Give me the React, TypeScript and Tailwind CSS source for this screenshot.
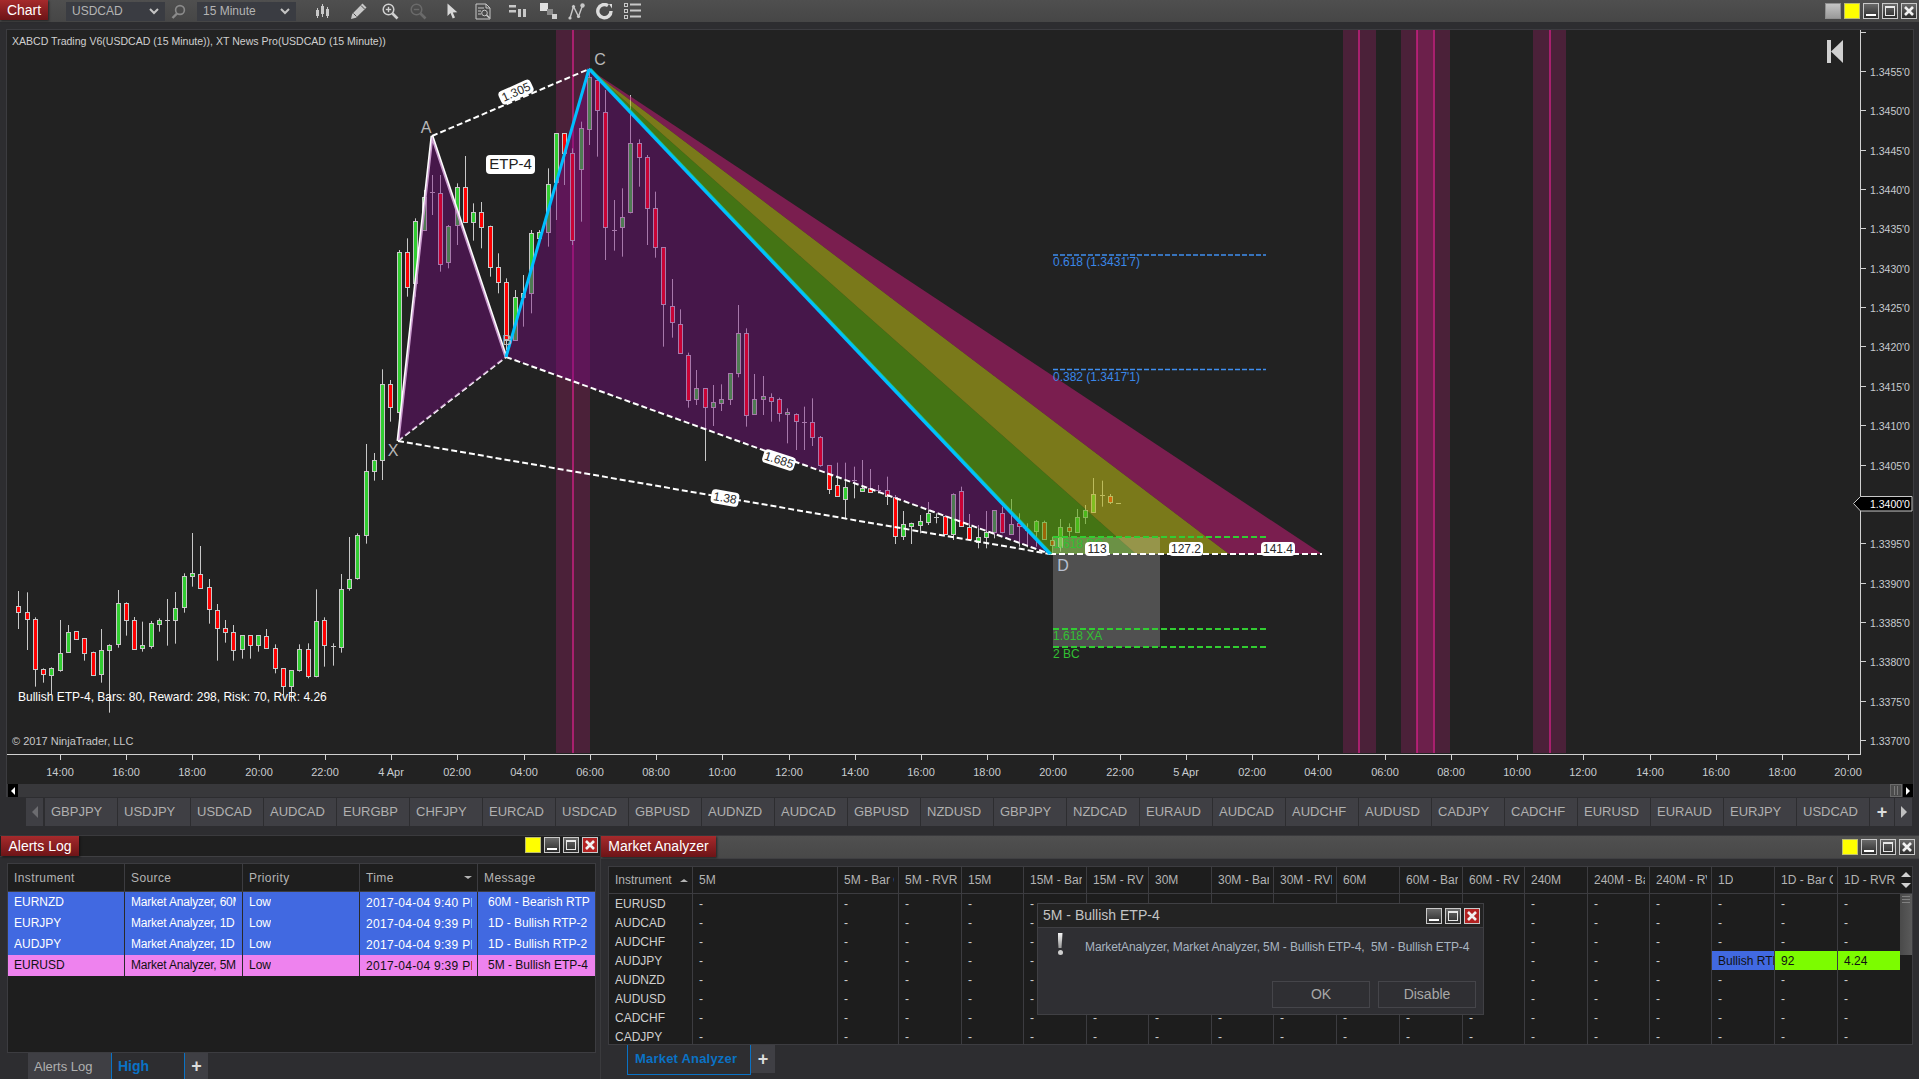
import React from "react";

type C = [number, number, number, number, string];

const z8: C[] = [
  [483,597,527,545,"r"],[487,660,545,568,"r"],[562,770,566,716,"r"],[715,758,716,731,"r"],[712,795,715,734,"g"],
  [570,725,670,719,"g"],[585,668,607,667,"g"],[604,626,604,626,"r"],[625,692,625,670,"r"],[665,737,667,734,"r"],
  [597,758,661,733,"g"],[643,848,646,659,"g"],[480,653,520,643,"g"],[517,617,520,571,"r"],[561,659,571,658,"r"],
  [575,665,646,655,"g"],[573,656,580,647,"g"],[565,605,571,583,"g"],[507,647,571,571,"g"],[486,641,535,569,"g"],
  [430,548,439,532,"g"],[309,470,430,439,"g"],[348,475,433,473,"r"],[447,581,472,538,"r"],[522,692,539,595,"r"],
  [570,638,595,607,"r"],[585,692,607,661,"r"],[616,686,616,658,"g"],[616,686,616,646,"r"],[616,665,616,646,"g"],
  [597,655,619,655,"r"],[643,730,655,715,"r"],[715,795,715,769,"r"],[721,815,721,769,"g"],[643,725,658,719,"g"],
  [640,745,658,739,"r"],[478,742,574,739,"g"],[562,710,571,646,"r"],[640,707,647,647,"g"],[432,668,478,652,"g"],
  [321,482,448,475,"g"],[310,449,316,445,"g"],[42,341,124,316,"g"],[69,152,91,124,"g"],
];
const z6: C[] = [
  [1018,1350,1063,1290,"g"],[1050,1175,1063,1130,"r"],[660,1230,667,1147,"g"],[625,800,667,770,"r"],[565,800,573,760,"g"],
  [480,575,500,600,"g"],[435,555,485,485,"g"],[435,725,490,703,"r"],[585,715,587,697,"g"],[460,645,470,585,"g"],
  [378,575,470,575,"r"],[520,632,545,575,"g"],[516,655,547,590,"r"],[587,740,587,712,"r"],[670,790,712,757,"r"],
  [745,960,755,930,"r"],[780,930,800,930,"g"],[735,890,790,800,"g"],[600,850,610,790,"g"],[600,630,607,625,"g"],
  [415,650,463,607,"g"],[310,570,310,455,"g"],[310,465,310,370,"r"],[355,645,370,630,"r"],[275,575,293,418,"g"],
  [115,345,140,298,"g"],[150,380,150,240,"r"],[180,690,245,592,"r"],[510,662,600,600,"g"],[475,680,562,590,"g"],
  [195,550,340,547,"g"],[328,470,340,382,"r"],[375,645,382,535,"r"],[485,683,535,652,"r"],[652,950,652,822,"r"],
  [747,923,827,877,"r"],[838,970,883,970,"r"],[968,1133,975,1110,"r"],[1020,1125,1075,1108,"g"],[1075,1293,1075,1132,"r"],
  [1065,1188,1115,1132,"g"],[1063,1143,1108,1120,"g"],[1030,1125,1030,1108,"g"],[825,1042,910,1030,"g"],[895,1190,910,1156,"r"],
  [1032,1155,1108,1153,"g"],[1038,1155,1097,1108,"g"],[1090,1175,1100,1113,"r"],[1103,1175,1108,1150,"r"],[1135,1240,1147,1153,"g"],
  [1150,1260,1153,1173,"r"],[1130,1260,1175,1175,"g"],[1105,1248,1175,1222,"r"],[1218,1310,1220,1305,"r"],
];
const z7: C[] = [
  [105,192,105,177,"r"],[98,197,166,197,"r"],[98,268,172,206,"g"],[110,205,150,150,"g"],[90,185,175,182,"g"],
  [117,185,173,185,"r"],[165,190,180,180,"g"],[140,225,181,198,"r"],[195,342,200,317,"r"],[243,330,283,317,"g"],
  [278,342,280,287,"g"],[255,310,273,285,"g"],[216,285,250,275,"g"],[250,280,262,262,"g"],[255,312,259,311,"r"],
  [190,330,193,311,"g"],[170,290,184,289,"r"],[252,330,290,328,"r"],[285,355,322,336,"g"],[243,355,307,322,"g"],
  [240,325,241,307,"g"],[230,310,250,307,"r"],[207,315,283,311,"g"],[250,350,280,288,"r"],[280,352,300,300,"g"],
  [270,350,274,302,"g"],[272,330,275,328,"r"],[320,370,329,345,"r"],[267,365,290,350,"g"],[280,320,292,304,"r"],
  [237,305,260,305,"g"],[225,282,241,260,"g"],[144,245,193,245,"g"],[152,230,194,194,"g"],[192,222,199,217,"r"],[218,218,218,218,"g"],
];
const candles: C[] = [
  ...z8.map((c) => [430 + c[0] / 3, 430 + c[1] / 3, 430 + c[2] / 3, 430 + c[3] / 3, c[4]] as C),
  ...z6.map((c) => [30 + c[0] / 3, 30 + c[1] / 3, 30 + c[2] / 3, 30 + c[3] / 3, c[4]] as C),
  ...z7.map((c) => [430 + c[0] / 3, 430 + c[1] / 3, 430 + c[2] / 3, 430 + c[3] / 3, c[4]] as C),
];

const PRICES = ["1.3455","1.3450","1.3445","1.3440","1.3435","1.3430","1.3425","1.3420","1.3415","1.3410","1.3405","1.3400","1.3395","1.3390","1.3385","1.3380","1.3375","1.3370"];
const TIMES = ["14:00","16:00","18:00","20:00","22:00","4 Apr","02:00","04:00","06:00","08:00","10:00","12:00","14:00","16:00","18:00","20:00","22:00","5 Apr","02:00","04:00","06:00","08:00","10:00","12:00","14:00","16:00","18:00","20:00"];
const TABS = ["GBPJPY","USDJPY","USDCAD","AUDCAD","EURGBP","CHFJPY","EURCAD","USDCAD","GBPUSD","AUDNZD","AUDCAD","GBPUSD","NZDUSD","GBPJPY","NZDCAD","EURAUD","AUDCAD","AUDCHF","AUDUSD","CADJPY","CADCHF","EURUSD","EURAUD","EURJPY","USDCAD"];

function Candles() {
  return (
    <g>
      {candles.map((c, i) => {
        const x = Math.round(18.3 + 8.27 * i);
        const top = Math.round(c[2]);
        const bot = Math.round(c[3]);
        const fill = c[4] === "g" ? "#32cd32" : "#ff0000";
        return (
          <g key={i}>
            <line x1={x + 0.5} x2={x + 0.5} y1={c[0]} y2={c[1]} stroke="#c8c8c8" strokeWidth={1} />
            {bot - top < 1 ? (
              <line x1={x - 2} x2={x + 3} y1={top + 0.5} y2={top + 0.5} stroke="#c8c8c8" strokeWidth={1} />
            ) : (
              <rect x={x - 1.5} y={top + 0.5} width={4} height={bot - top} fill={fill} stroke="#c8c8c8" strokeWidth={1} />
            )}
          </g>
        );
      })}
    </g>
  );
}

function Label({ x, y, r = 0, w, text, h = 14 }: { x: number; y: number; r?: number; w: number; text: string; h?: number }) {
  return (
    <g transform={`translate(${x} ${y}) rotate(${r})`}>
      <rect x={-w / 2} y={-h / 2} width={w} height={h} rx={4} fill="#ffffff" />
      <text x={0} y={4} textAnchor="middle" fontSize={12} fill="#2a2a2a">{text}</text>
    </g>
  );
}

function ChartSvg() {
  const X = [398, 441];
  const A = [432, 136];
  const B = [506, 357];
  const CC = [589, 69];
  const D = [1050, 554];
  const pts = (a: number[][]) => a.map((p) => p.join(",")).join(" ");
  const bands = [
    [556, 590, [573]],
    [1343, 1376, [1359]],
    [1401, 1434, [1417]],
    [1417, 1450, [1434]],
    [1533, 1566, [1550]],
  ] as [number, number, number[]][];
  return (
    <svg width={1906} height={754} viewBox="7 30 1906 754" className="block bg-[#222222]">
      {bands.map(([a, b, ls], i) => (
        <g key={i}>
          <rect x={a} y={30} width={b - a} height={723} fill="rgba(239,29,149,0.2)" />
          {ls.map((l) => (
            <rect key={l} x={l - 1} y={30} width={2} height={723} fill="#a8206e" />
          ))}
        </g>
      ))}
      <Candles />
      <polyline points={pts([X, A, B])} fill="none" stroke="#ffffff" strokeWidth={3} />
      <line x1={X[0]} y1={X[1]} x2={B[0]} y2={B[1]} stroke="#ffffff" strokeWidth={2} strokeDasharray="6 3" />
      <polygon points={pts([X, A, B])} fill="rgba(122,7,131,0.41)" />
      <polygon points={pts([CC, D, [1136, 554]])} fill="rgba(92,172,12,0.6)" />
      <polygon points={pts([CC, [1136, 554], [1229, 554]])} fill="rgba(182,180,22,0.6)" />
      <polygon points={pts([CC, [1229, 554], [1322, 554]])} fill="rgba(181,29,110,0.6)" />
      <polygon points={pts([B, CC, D])} fill="rgba(122,7,131,0.41)" />
      <rect x={1053} y={537} width={107} height={110} fill="rgba(255,255,255,0.21)" />
      <line x1={A[0]} y1={A[1]} x2={CC[0]} y2={CC[1]} stroke="#fff" strokeWidth={2} strokeDasharray="6 3" />
      <line x1={B[0]} y1={B[1]} x2={D[0]} y2={D[1]} stroke="#fff" strokeWidth={2} strokeDasharray="6 3" />
      <line x1={X[0]} y1={X[1]} x2={D[0]} y2={D[1]} stroke="#fff" strokeWidth={2} strokeDasharray="6 3" />
      <line x1={D[0]} y1={D[1]} x2={1322} y2={554} stroke="#fff" strokeWidth={2} strokeDasharray="6 3" />
      <line x1={CC[0] + 1.5} y1={CC[1]} x2={D[0] + 1.5} y2={D[1]} stroke="#1cc88f" strokeWidth={2.5} />
      <line x1={CC[0]} y1={CC[1]} x2={D[0]} y2={D[1]} stroke="#00bfff" strokeWidth={3} />
      <line x1={B[0]} y1={B[1]} x2={CC[0]} y2={CC[1]} stroke="#00bfff" strokeWidth={3} />

      {[[255, "0.618 (1.3431'7)"], [369.5, "0.382 (1.3417'1)"]].map(([y, t]) => (
        <g key={t as string}>
          <line x1={1053} x2={1266} y1={y as number} y2={y as number} stroke="#3f8ef0" strokeWidth={1.5} strokeDasharray="5 2" />
          <text x={1053} y={(y as number) + 11} fontSize={12} fill="#3a87e8">{t}</text>
        </g>
      ))}
      {[537, 629, 647].map((y) => (
        <line key={y} x1={1053} x2={1266} y1={y} y2={y} stroke="#32cd32" strokeWidth={2} strokeDasharray="6 3" />
      ))}
      <text x={1053} y={548} fontSize={12} fill="#33c033">1.618 BC</text>
      <text x={1053} y={640} fontSize={12} fill="#33c033">1.618 XA</text>
      <text x={1053} y={658} fontSize={12} fill="#33c033">2 BC</text>

      <Label x={516} y={92} r={-24} w={35} text="1.305" />
      <Label x={779} y={460} r={18} w={33} text="1.685" />
      <Label x={725} y={498} r={10} w={28} text="1.38" />
      <Label x={1097} y={549} w={24} text="113" />
      <Label x={1186} y={549} w={34} text="127.2" />
      <Label x={1278} y={549} w={34} text="141.4" />
      <rect x={486} y={155} width={49} height={19} rx={4} fill="#ffffff" />
      <text x={510.5} y={169} textAnchor="middle" fontSize={15} fill="#222">ETP-4</text>

      <text x={426} y={133} textAnchor="middle" fontSize={16} fill="#b8b8b8">A</text>
      <text x={600} y={65} textAnchor="middle" fontSize={16} fill="#b8b8b8">C</text>
      <text x={393} y={456} textAnchor="middle" fontSize={16} fill="#b8b8b8">X</text>
      <text x={507} y={345} textAnchor="middle" fontSize={14} fill="#b8b8b8">B</text>
      <text x={1063} y={571} textAnchor="middle" fontSize={16} fill="#b8c0d0">D</text>

      <text x={12} y={45} fontSize={10.55} fill="#d0d0d0">XABCD Trading V6(USDCAD (15 Minute)), XT News Pro(USDCAD (15 Minute))</text>
      <text x={18} y={701} fontSize={12} fill="#ffffff">Bullish ETP-4, Bars: 80, Reward: 298, Risk: 70, RvR: 4.26</text>
      <text x={12} y={745} fontSize={11} fill="#c8c8c8">© 2017 NinjaTrader, LLC</text>

      <polygon points="1827,40 1831,40 1831,63 1827,63" fill="#d0d0d0" />
      <polygon points="1843,40 1843,63 1831,51.5" fill="#d0d0d0" />

      <line x1={1860.5} x2={1860.5} y1={30} y2={754} stroke="#d0d0d0" />
      <line x1={7} x2={1861} y1={754.5} y2={754.5} stroke="#d0d0d0" />
      <line x1={1860} x2={1866} y1={32.5} y2={32.5} stroke="#d0d0d0" />
      {PRICES.map((p, i) => {
        const y = Math.round(71 + 39.35 * i);
        return (
          <g key={p}>
            <line x1={1860} x2={1866} y1={y + 0.5} y2={y + 0.5} stroke="#d0d0d0" />
            {p !== "1.3400" && <text x={1870} y={y + 4.5} fontSize={10.5} fill="#c8ccd0">{p + "'0"}</text>}
          </g>
        );
      })}
      <polygon points="1853.5,503.5 1860.5,496.5 1912,496.5 1912,511 1860.5,511" fill="#000" stroke="#c8c8c8" />
      <text x={1870} y={507.5} fontSize={10.5} fill="#ffffff">1.3400'0</text>
      {TIMES.map((t, i) => {
        const x = Math.round(60 + 66.23 * i);
        return (
          <g key={i}>
            <line x1={x + 0.5} x2={x + 0.5} y1={754} y2={760} stroke="#d0d0d0" />
            <text x={x} y={776} textAnchor="middle" fontSize={11} fill="#c8ccd0">{t}</text>
          </g>
        );
      })}
    </svg>
  );
}

function WinBtn({ kind, red }: { kind: "grey" | "yellow" | "min" | "max" | "close"; red?: boolean }) {
  if (kind === "grey") return <div className="w-4 h-4 border border-[#8f8f8f] bg-gradient-to-b from-[#c4c4c4] to-[#9a9a9a]" />;
  if (kind === "yellow") return <div className="w-4 h-4 border border-[#bdbd70] bg-[#ffff00]" />;
  const bg = red
    ? "bg-[#b22222] border-[#c9c9c9]"
    : "bg-gradient-to-b from-[#6a6a6a] to-[#2c2c2c] border-[#c9c9c9]";
  return (
    <div className={`w-4 h-4 border ${bg} relative flex items-center justify-center`}>
      {kind === "min" && <div className="absolute left-[2px] right-[2px] bottom-[2px] h-[2px] bg-white" />}
      {kind === "max" && <div className="w-[10px] h-[10px] border border-[#e8e8e8] border-t-2" />}
      {kind === "close" && (
        <svg width="12" height="12" viewBox="0 0 12 12">
          <path d="M2 2 L10 10 M10 2 L2 10" stroke="#f0f0f0" strokeWidth="2.6" />
        </svg>
      )}
    </div>
  );
}

const ic = "#c8c8c8";
const IconBars = () => (
  <svg width="15" height="16" viewBox="0 0 15 16" className="ml-[19px]">
    <path d="M2.5 5v10M7.5 1v13M12.5 4v11" stroke={ic} />
    <rect x="1" y="7" width="3" height="6" fill={ic} /><rect x="6" y="3" width="3" height="8" fill={ic} /><rect x="11" y="6" width="3" height="7" fill={ic} />
  </svg>
);
const IconPencil = () => (
  <svg width="18" height="18" viewBox="0 0 18 18" className="ml-[20px]">
    <path d="M1 17l1.2-5L12.5 1.5l4 4L6 15.8z" fill={ic} /><path d="M3.5 11.5l3 3" stroke="#4a4a4a" /><path d="M11 3.5l3.5 3.5" stroke="#4a4a4a" />
  </svg>
);
const IconZoom = ({ plus, dim }: { plus?: boolean; dim?: boolean }) => {
  const c = dim ? "#6a6a6a" : "#d0d0d0";
  return (
    <svg width="17" height="17" viewBox="0 0 17 17" className={plus ? "ml-[14px]" : "ml-[11px]"}>
      <circle cx="6.5" cy="6.5" r="5.3" fill="none" stroke={c} strokeWidth="1.5" />
      <path d="M10.5 10.5l5 5" stroke={c} strokeWidth="2.6" />
      <path d="M3.8 6.5h5.4" stroke={c} strokeWidth="1.4" />
      {plus && <path d="M6.5 3.8v5.4" stroke={c} strokeWidth="1.4" />}
    </svg>
  );
};
const IconCursor = () => (
  <svg width="11" height="16" viewBox="0 0 11 16" className="ml-[20px]"><path d="M0.5 0.5v12.5l3-3 2.2 5.5 2.3-1-2.2-5 4.5-.3z" fill="#d8d8d8" /></svg>
);
const IconDoc = () => (
  <svg width="17" height="17" viewBox="0 0 17 17" className="ml-[17px]">
    <path d="M1 1h10l4 4v11H1z" fill="none" stroke={ic} /><path d="M11 1v4h4" fill="none" stroke={ic} />
    <path d="M3 5h6M3 8h3M3 11h3" stroke={ic} /><circle cx="9.5" cy="10" r="2.8" fill="none" stroke={ic} /><path d="M11.5 12l3 3" stroke={ic} strokeWidth="1.6" />
  </svg>
);
const IconStrat = () => (
  <svg width="17" height="13" viewBox="0 0 17 13" className="ml-[17px]">
    <rect x="0" y="0" width="7" height="2.5" fill={ic} /><rect x="0" y="5" width="7" height="2.5" fill={ic} /><rect x="9" y="4" width="3" height="8" fill={ic} /><rect x="14" y="4" width="3" height="8" fill={ic} />
  </svg>
);
const IconSquares = () => (
  <svg width="17" height="17" viewBox="0 0 17 17" className="ml-[14px]">
    <rect x="0" y="0" width="8" height="8" fill="#e0e0e0" /><rect x="7" y="6" width="6" height="6" fill="#8a8a8a" /><rect x="12" y="11" width="5" height="5" fill="#cfcfcf" />
  </svg>
);
const IconN = () => (
  <svg width="17" height="17" viewBox="0 0 17 17" className="ml-[11px]">
    <path d="M2 15L5.5 3.5l5 10L14.5 2.5" fill="none" stroke={ic} strokeWidth="1.4" />
    <circle cx="2" cy="15" r="1.6" fill={ic} /><circle cx="5.5" cy="3.5" r="1.6" fill={ic} /><circle cx="10.5" cy="13.5" r="1.6" fill={ic} /><circle cx="14.5" cy="2.5" r="2.2" fill={ic} />
  </svg>
);
const IconRing = () => (
  <svg width="17" height="17" viewBox="0 0 17 17" className="ml-[11px]">
    <path d="M12 2.6A6.6 6.6 0 1 0 15 8" fill="none" stroke="#dcdcdc" strokeWidth="3.4" /><path d="M13 1l3 0 0 4.4z" fill="#dcdcdc" />
  </svg>
);
const IconList = () => (
  <svg width="17" height="16" viewBox="0 0 17 16" className="ml-[11px]">
    {[0.5, 6.5, 12.5].map((y) => (
      <g key={y}><rect x="0.5" y={y} width="3" height="3" fill="none" stroke={ic} /><rect x="6" y={y} width="11" height="2" fill={ic} /></g>
    ))}
  </svg>
);

function Combo({ text, w }: { text: string; w: string }) {
  return (
    <div className={`${w} h-[19px] bg-[#3a3c42] flex items-center pl-[6px] pr-[6px] justify-between text-[12px] text-[#b4b4b4]`}>
      <span>{text}</span>
      <svg width="10" height="7" viewBox="0 0 10 7"><path d="M1 1l4 4 4-4" fill="none" stroke="#c4c4c4" strokeWidth="2" /></svg>
    </div>
  );
}

function Toolbar() {
  return (
    <div className="h-[22px] bg-gradient-to-b from-[#4f4f4f] to-[#464646] flex items-center shrink-0">
      <div className="w-[48px] h-[20px] self-start bg-gradient-to-b from-[#a62a2c] to-[#6d1417] text-white text-[14px] flex items-center justify-center shadow-[1px_1px_2px_#222]">Chart</div>
      <Combo text="USDCAD" w="w-[99px] ml-[18px]" />
      <svg width="15" height="15" viewBox="0 0 15 15" className="ml-[6px]">
        <circle cx="9" cy="6" r="4.4" fill="none" stroke="#8a8a8a" strokeWidth="1.6" /><path d="M6 9.5L1.5 14" stroke="#8a8a8a" strokeWidth="2.4" />
      </svg>
      <Combo text="15 Minute" w="w-[99px] ml-[11px]" />
      <IconBars /><IconPencil /><IconZoom plus /><IconZoom dim /><IconCursor /><IconDoc /><IconStrat /><IconSquares /><IconN /><IconRing /><IconList />
      <div className="ml-auto mr-[2px] flex gap-[3px]">
        <WinBtn kind="grey" /><WinBtn kind="yellow" /><WinBtn kind="min" /><WinBtn kind="max" /><WinBtn kind="close" />
      </div>
    </div>
  );
}

function ChartPanel() {
  return (
    <div className="ml-[6px] mt-[7px] w-[1908px] border border-[#3c3c40] border-b-0 shrink-0">
      <ChartSvg />
      <div className="h-[13px] bg-[#38383b] flex items-stretch">
        <div className="w-[10px] ml-[1px] bg-black flex items-center justify-center">
          <div className="w-0 h-0 border-y-[4px] border-y-transparent border-r-[4px] border-r-white" />
        </div>
        <div className="flex-1" />
        <div className="w-[12px] border border-[#6a6a6a] bg-[#4c4c4c] flex items-center justify-center gap-[2px]">
          <div className="w-px h-[9px] bg-[#7a7a7a]" /><div className="w-px h-[9px] bg-[#7a7a7a]" />
        </div>
        <div className="w-[10px] ml-px bg-black flex items-center justify-center">
          <div className="w-0 h-0 border-y-[4px] border-y-transparent border-l-[4px] border-l-white" />
        </div>
      </div>
    </div>
  );
}

function InstrumentTabs() {
  return (
    <div className="h-[28px] mt-px flex shrink-0 pl-[26px] text-[13px] text-[#b0b0b0]">
      <div className="w-[17px] bg-[#3f3f44] flex items-center justify-center mr-[2px]">
        <div className="w-0 h-0 border-y-[6px] border-y-transparent border-r-[6px] border-r-[#6c6c70]" />
      </div>
      {TABS.map((t, i) => (
        <div key={i} className="w-[72px] mr-px bg-[#3f3f44] flex items-center pl-[6px]">{t}</div>
      ))}
      <div className="w-[24px] bg-[#3f3f44] flex items-center justify-center text-[#dcdcdc] text-[18px] font-bold">+</div>
      <div className="w-[17px] ml-px bg-[#3f3f44] flex items-center justify-center">
        <div className="w-0 h-0 border-y-[6px] border-y-transparent border-l-[6px] border-l-[#c0c0c0]" />
      </div>
    </div>
  );
}

const ALERTS = [
  ["EURNZD", "Market Analyzer, 60M", "Low", "2017-04-04 9:40 PM", "60M - Bearish RTP"],
  ["EURJPY", "Market Analyzer, 1D", "Low", "2017-04-04 9:39 PM", "1D - Bullish RTP-2"],
  ["AUDJPY", "Market Analyzer, 1D", "Low", "2017-04-04 9:39 PM", "1D - Bullish RTP-2"],
  ["EURUSD", "Market Analyzer, 5M", "Low", "2017-04-04 9:39 PM", "5M - Bullish ETP-4"],
];

function AlertsPanel() {
  return (
    <div className="w-[600px] flex flex-col shrink-0">
      <div className="h-[20px] bg-[#1f1f1f] border-b border-[#3f3f42] box-content flex items-start shrink-0">
        <div className="w-[78px] ml-px h-[20px] bg-gradient-to-b from-[#a62a2c] to-[#6d1417] text-white text-[14px] flex items-center justify-center shadow-[1px_1px_2px_#111]">Alerts Log</div>
        <div className="ml-auto mr-[2px] mt-px flex gap-[3px]">
          <WinBtn kind="yellow" /><WinBtn kind="min" /><WinBtn kind="max" /><WinBtn kind="close" red />
        </div>
      </div>
      <div className="ml-[7px] mt-[6px] w-[589px] h-[190px] border border-[#3c3c40] bg-[#1e1e1e] shrink-0 text-[12px]">
        <div className="grid grid-cols-[117px_118px_117px_118px_117px] h-[27px] border-b border-[#3c3c40] box-content text-[#b4b4b4]">
          {["Instrument", "Source", "Priority", "Time", "Message"].map((h, i) => (
            <div key={h} className={`flex items-center justify-between pl-[6px] pr-[5px] ${i < 4 ? "border-r border-[#3c3c40]" : ""}`}>
              <span className="tracking-[0.4px]">{h}</span>
              {h === "Time" && <div className="w-0 h-0 border-x-[4px] border-x-transparent border-t-[3px] border-t-[#b4b4b4]" />}
            </div>
          ))}
        </div>
        {ALERTS.map((r, i) => {
          const pink = i === 3;
          return (
            <div key={i} className={`grid grid-cols-[117px_118px_117px_118px_117px] h-[21px] ${pink ? "bg-[#ee82ee] text-[#111]" : "bg-[#4169e1] text-white"}`}>
              {r.map((c, j) => (
                <div key={j} className={`flex items-center ${j < 4 ? "border-r border-[#2a2a2a]" : ""} ${j === 4 ? "pl-[10px] pb-[2px]" : "pl-[6px]"} ${j === 1 ? "pr-[6px] pb-[2px]" : j === 3 ? "pr-[5px] pt-[1px]" : j === 4 ? "" : "pb-[2px]"}`}>
                  <div className={`overflow-hidden whitespace-nowrap ${j === 1 ? "tracking-[-0.2px]" : j === 3 ? "tracking-[0.3px]" : ""}`}>{c}</div>
                </div>
              ))}
            </div>
          );
        })}
      </div>
      <div className="flex pl-[28px] h-[27px] text-[14px]">
        <div className="w-[83px] bg-[#3f3f44] text-[#b0b0b0] flex items-center pl-[6px] text-[13px]">Alerts Log</div>
        <div className="w-[74px] border-x border-[#0a72c5] text-[#0a72c5] flex items-center pl-[6px] font-bold text-[14px]">High</div>
        <div className="w-[23px] bg-[#3f3f44] text-[#dcdcdc] flex items-center justify-center text-[18px] font-bold">+</div>
      </div>
    </div>
  );
}

const MA_HEAD = ["Instrument","5M","5M - Bar C","5M - RVR","15M","15M - Bar","15M - RVR","30M","30M - Bar","30M - RVR","60M","60M - Bar","60M - RVR","240M","240M - Bar","240M - RVR","1D","1D - Bar C","1D - RVR"];
const MA_ROWS = ["EURUSD","AUDCAD","AUDCHF","AUDJPY","AUDNZD","AUDUSD","CADCHF","CADJPY"];
const grid = "grid grid-cols-[84px_145px_61px_63px_62px_63px_62px_63px_62px_63px_63px_63px_62px_63px_62px_62px_63px_63px_62px]";

function Dialog() {
  return (
    <div className="absolute left-[436px] top-[67px] w-[447px] h-[112px] bg-[#2f2f33] border border-[#404044] flex flex-col">
      <div className="h-[23px] bg-[#232323] border-b border-[#404044] box-content flex items-center pl-[5px] pr-[3px] text-[14px] text-[#c4c4c4]">
        <span>5M - Bullish ETP-4</span>
        <div className="ml-auto flex gap-[3px]"><WinBtn kind="min" /><WinBtn kind="max" /><WinBtn kind="close" red /></div>
      </div>
      <div className="flex pl-[18px] pt-[4px]">
        <div className="flex flex-col items-center w-[8px] mt-[1px]">
          <div className="w-[5px] h-[15px] bg-gradient-to-b from-[#f4f4f4] to-[#9a9a9a] [clip-path:polygon(0_0,100%_0,80%_100%,20%_100%)]" />
          <div className="w-[5px] h-[5px] rounded-full bg-[#cfcfcf] mt-[2px]" />
        </div>
        <div className="ml-[21px] mt-[6px] text-[12px] tracking-[-0.1px] text-[#a8b4c0] whitespace-pre">MarketAnalyzer, Market Analyzer, 5M - Bullish ETP-4,  5M - Bullish ETP-4</div>
      </div>
      <div className="mt-auto mb-[6px] flex justify-end pr-[7px] gap-[8px] text-[14px] text-[#a8a8a8]">
        <div className="w-[98px] h-[27px] border border-[#45454a] flex items-center justify-center">OK</div>
        <div className="w-[98px] h-[27px] border border-[#45454a] flex items-center justify-center">Disable</div>
      </div>
    </div>
  );
}

function AnalyzerPanel() {
  return (
    <div className="flex-1 flex flex-col relative border-l border-[#3a3a3d] min-w-0">
      <div className="h-[22px] bg-gradient-to-b from-[#505050] to-[#484848] border-b border-[#3f3f42] box-content flex items-center shrink-0">
        <div className="w-[115px] h-[21px] self-start bg-gradient-to-b from-[#a62a2c] to-[#6d1417] text-white text-[14px] flex items-center justify-center shadow-[1px_1px_2px_#222]">Market Analyzer</div>
        <div className="ml-auto mr-[4px] flex gap-[3px]">
          <WinBtn kind="yellow" /><WinBtn kind="min" /><WinBtn kind="max" /><WinBtn kind="close" />
        </div>
      </div>
      <div className="ml-[7px] mt-[7px] w-[1305px] h-[179px] border border-[#3c3c40] bg-[#1d1d1d] flex overflow-hidden text-[12px] shrink-0">
        <div className="w-[1291px] shrink-0">
          <div className={`${grid} h-[26px] border-b border-[#3c3c40] box-content text-[#b4b4b4]`}>
            {MA_HEAD.map((h, i) => (
              <div key={i} className={`flex items-center justify-between pl-[6px] pr-[4px] overflow-hidden whitespace-nowrap ${i < 18 ? "border-r border-[#3c3c40]" : ""}`}>
                <div className="overflow-hidden">{h}</div>
                {i === 0 && <div className="w-0 h-0 shrink-0 ml-1 border-x-[4px] border-x-transparent border-b-[3px] border-b-[#b4b4b4]" />}
              </div>
            ))}
          </div>
          {MA_ROWS.map((r, ri) => (
            <div key={r} className={`${grid} h-[19px]`}>
              {MA_HEAD.map((_, i) => {
                const hot = ri === 3 && i >= 16;
                const text = i === 0 ? r : hot ? (i === 16 ? "Bullish RTP" : i === 17 ? "92" : "4.24") : "-";
                const bg = hot ? (i === 16 ? "bg-[#4169e1] text-[#111]" : "bg-[#7cfc00] text-[#111]") : "text-[#cfcfcf]";
                return (
                  <div key={i} className={`flex items-center pl-[6px] overflow-hidden whitespace-nowrap ${bg} ${i < 18 ? "border-r border-[#3c3c40]" : ""}`}>{text}</div>
                );
              })}
            </div>
          ))}
        </div>
        <div className="flex-1 flex flex-col">
          <div className="h-[27px] border-b border-[#3c3c40] flex flex-col items-center justify-center gap-[6px]">
            <div className="w-0 h-0 border-x-[5px] border-x-transparent border-b-[5px] border-b-[#d0d0d0]" />
            <div className="w-0 h-0 border-x-[5px] border-x-transparent border-t-[5px] border-t-[#d0d0d0]" />
          </div>
          <div className="h-[61px] bg-gradient-to-r from-[#4a4a4a] to-[#5a5a5a] flex flex-col items-center pt-[2px] gap-[2px]">
            <div className="w-[8px] h-px bg-[#808080]" /><div className="w-[8px] h-px bg-[#808080]" /><div className="w-[8px] h-px bg-[#808080]" />
          </div>
        </div>
      </div>
      <div className="ml-[26px] flex h-[30px] shrink-0">
        <div className="w-[124px] border-x border-b border-[#0a72c5] text-[#0a72c5] font-bold text-[13px] flex items-center pl-[7px] pb-[2px] whitespace-nowrap tracking-[0.2px]">Market Analyzer</div>
        <div className="w-[24px] h-[28px] bg-[#3f3f44] text-[#dcdcdc] flex items-center justify-center text-[18px] font-bold">+</div>
      </div>
      <Dialog />
    </div>
  );
}

export default function App() {
  return (
    <div className="w-[1919px] h-[1079px] bg-[#2d2d30] flex flex-col overflow-hidden font-['Liberation_Sans',Arial,sans-serif]">
      <Toolbar />
      <ChartPanel />
      <InstrumentTabs />
      <div className="mt-[9px] flex flex-1 min-h-0 border-t border-[#3a3a3d]">
        <AlertsPanel />
        <AnalyzerPanel />
      </div>
    </div>
  );
}
